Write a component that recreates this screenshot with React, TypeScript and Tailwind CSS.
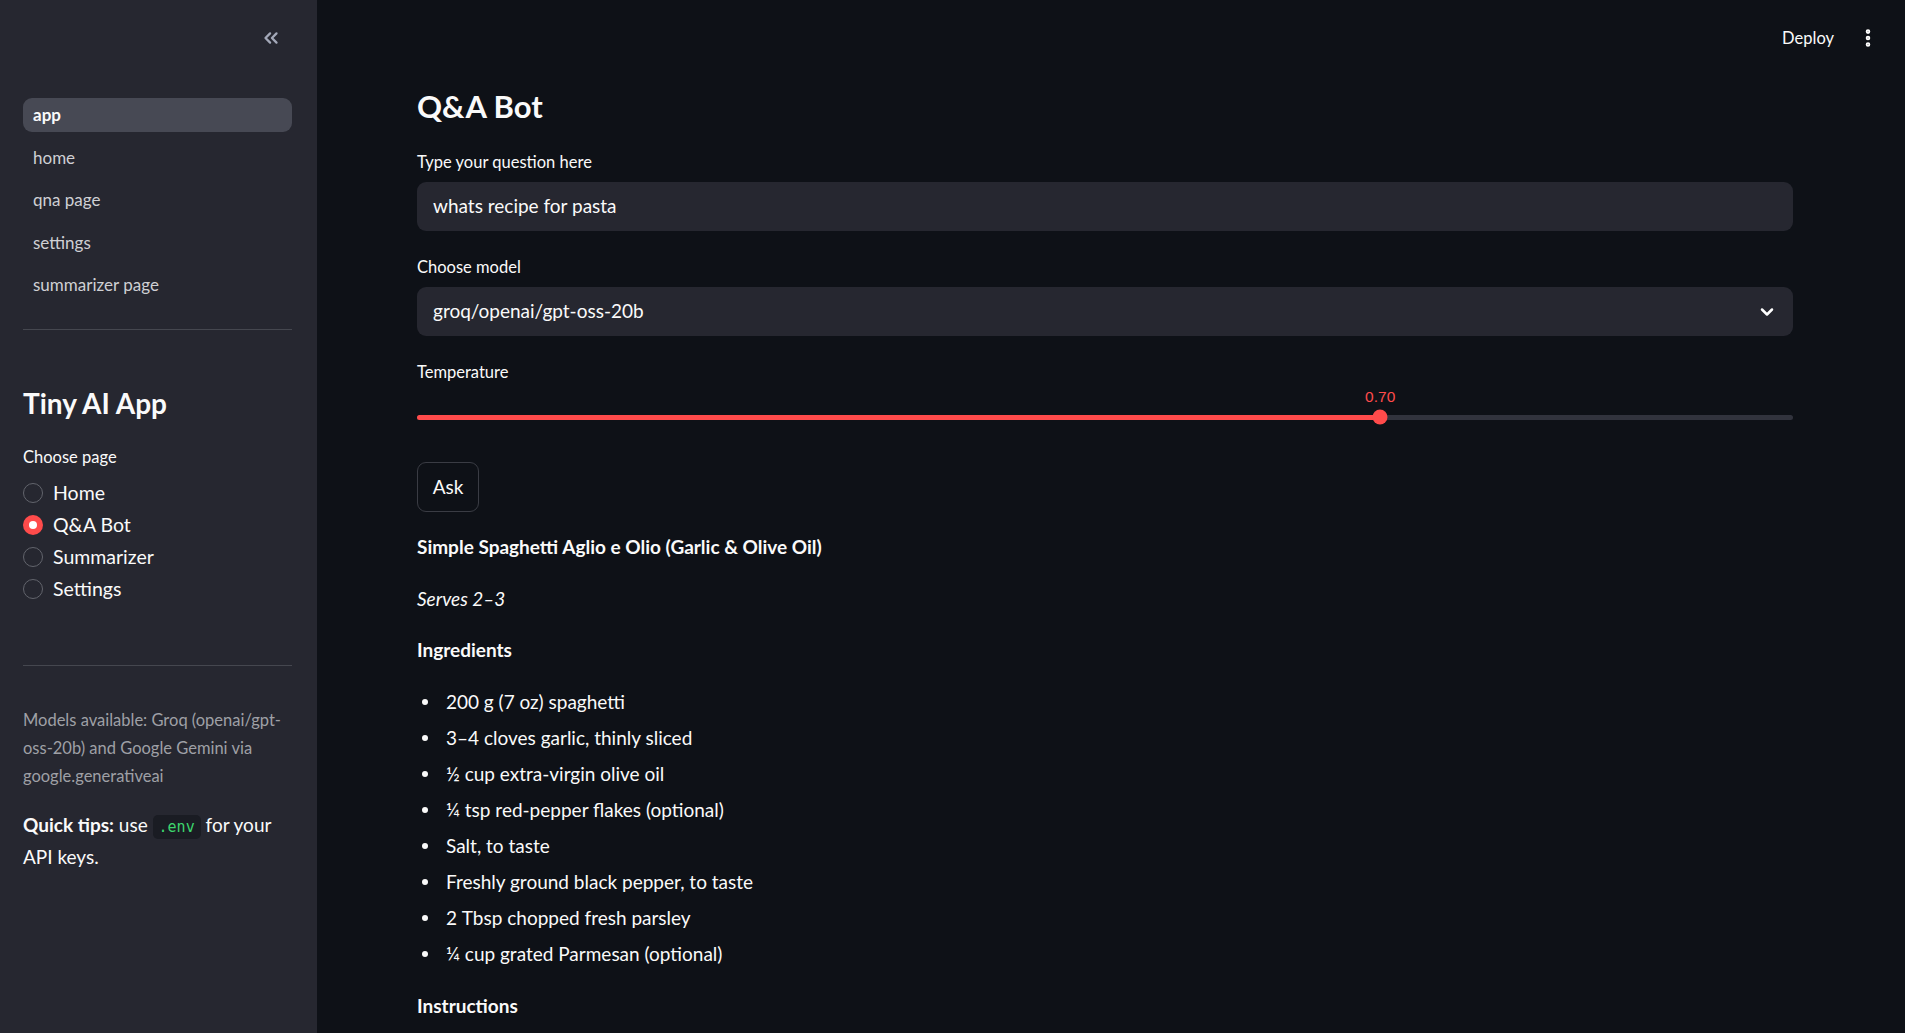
import React from "react";
import { ChevronsLeft, ChevronDown, EllipsisVertical } from "lucide-react";

const FONT = { fontFamily: "Lato, 'Noto Sans', sans-serif" };

const navItems = ["app", "home", "qna page", "settings", "summarizer page"];
const radios = ["Home", "Q&A Bot", "Summarizer", "Settings"];
const ingredients = [
  "200\u202Fg (7\u202Foz) spaghetti",
  "3\u20134 cloves garlic, thinly sliced",
  "\u00BD cup extra-virgin olive oil",
  "\u00BC tsp red-pepper flakes (optional)",
  "Salt, to taste",
  "Freshly ground black pepper, to taste",
  "2\u202FTbsp chopped fresh parsley",
  "\u00BC cup grated Parmesan (optional)",
];

export default function App() {
  const temp = 0.7;
  return (
    <div
      className="flex h-[1033px] w-[1905px] overflow-hidden bg-[#0e1117] text-[#fafafa]"
      style={FONT}
    >
      {/* Sidebar */}
      <aside className="flex w-[317px] shrink-0 flex-col bg-[#262730] pl-[23px] pr-[25px]">
        <div className="flex h-[76px] items-center justify-end pr-[10px]">
          <ChevronsLeft className="h-[22px] w-[22px] text-[#a3a8b8]" strokeWidth={2.5} />
        </div>
        <nav className="mt-[22px] flex flex-col gap-[8.5px]">
          {navItems.map((n, i) => (
            <div
              key={n}
              className={
                i === 0
                  ? "flex h-[34px] items-center rounded-[9px] bg-[#474954] pl-[10px] text-[17px] font-bold text-[#fafafa]"
                  : "flex h-[34px] items-center rounded-[9px] pl-[10px] text-[17px] text-[#cfd0d4]"
              }
            >
              {n}
            </div>
          ))}
        </nav>
        <div className="mt-[27px] h-px bg-[#45474f]" />
        <div className="mt-[51px] flex h-[44px] items-center text-[28px] font-bold leading-none">
          Tiny AI App
        </div>
        <div className="mt-[20px] flex h-[24px] items-center text-[16.5px]">Choose page</div>
        <div className="mt-[8px] flex flex-col">
          {radios.map((r, i) => (
            <div key={r} className="flex h-[32px] items-center gap-[10px]">
              {i === 1 ? (
                <span className="flex h-[20px] w-[20px] items-center justify-center rounded-full bg-[#ff4b4b]">
                  <span className="h-[8px] w-[8px] rounded-full bg-white" />
                </span>
              ) : (
                <span className="h-[20px] w-[20px] rounded-full border-[1.5px] border-[#62646c]" />
              )}
              <span className="text-[19.5px]">{r}</span>
            </div>
          ))}
        </div>
        <div className="mt-[60px] h-px bg-[#45474f]" />
        <div className="mt-[40px] text-[16.5px] leading-[28px] text-[#9fa0a6]">
          Models available: Groq (openai/gpt-
          <br />
          oss-20b) and Google Gemini via
          <br />
          google.generativeai
        </div>
        <div className="mt-[19px] text-[19px] leading-[32px]">
          <span className="font-bold">Quick tips:</span> use{" "}
          <code
            className="rounded-[5px] bg-[#1a1c23] px-[6px] py-[3px] text-[15px] leading-none text-[#3dd56d]"
            style={{ fontFamily: "'DejaVu Sans Mono', monospace" }}
          >
            .env
          </code>{" "}
          for your
          <br />
          API keys.
        </div>
      </aside>

      {/* Main */}
      <main className="flex min-w-0 flex-1 flex-col">
        <header className="flex h-[76px] items-center justify-end gap-[23px] pr-[26px]">
          <span className="text-[16.5px]">Deploy</span>
          <EllipsisVertical className="h-[22px] w-[22px] text-white" strokeWidth={3} />
        </header>

        <div className="flex flex-col pl-[100px] pr-[112px] pt-[6px]">
          <h1 className="flex h-[48px] items-center text-[31px] font-bold leading-none">Q&amp;A Bot</h1>

          <div className="mt-[20px] flex h-[24px] items-center text-[16.5px]">Type your question here</div>
          <div className="mt-[8px] flex h-[49px] items-center rounded-[9px] bg-[#262730] px-[16px] text-[19px]">
            whats recipe for pasta
          </div>

          <div className="mt-[24px] flex h-[24px] items-center text-[16.5px]">Choose model</div>
          <div className="mt-[8px] flex h-[49px] items-center justify-between rounded-[9px] bg-[#262730] pl-[16px] pr-[16px] text-[19px]">
            <span>groq/openai/gpt-oss-20b</span>
            <ChevronDown className="h-[20px] w-[20px] text-white" strokeWidth={3} />
          </div>

          <div className="mt-[24px] flex h-[24px] items-center text-[16.5px]">Temperature</div>
          <div className="relative h-[44px]">
            <div
              className="absolute top-0 flex h-[26px] -translate-x-1/2 items-center text-[15.5px] text-[#ff4b4b]"
              style={{ left: `${temp * 100}%`, fontFamily: "'Liberation Sans', Arial, sans-serif" }}
            >
              0.70
            </div>
            <div className="absolute left-0 right-0 top-[26px] flex h-[14px] items-center">
              <div className="relative h-[5px] w-full rounded-full bg-[#31333d]">
                <div
                  className="absolute left-0 top-0 h-[5px] rounded-full bg-[#ff4b4b]"
                  style={{ width: `${temp * 100}%` }}
                />
                <div
                  className="absolute top-1/2 h-[15px] w-[15px] -translate-x-1/2 -translate-y-1/2 rounded-full bg-[#ff4b4b]"
                  style={{ left: `${temp * 100}%` }}
                />
              </div>
            </div>
          </div>

          <button className="mt-[34px] flex h-[50px] w-[62px] items-center justify-center rounded-[9px] border border-[#3a3c44] bg-[#0e1117] text-[19px] text-[#fafafa]">
            Ask
          </button>

          <div className="mt-[20px] flex h-[30px] items-center text-[19px] font-bold">
            Simple Spaghetti Aglio e Olio (Garlic &amp; Olive Oil)
          </div>
          <div className="mt-[22px] flex h-[30px] items-center text-[19px] italic">Serves 2–3</div>
          <div className="mt-[21px] flex h-[30px] items-center text-[19px] font-bold">Ingredients</div>
          <ul className="mt-[22px] flex flex-col gap-[6px]">
            {ingredients.map((it) => (
              <li key={it} className="flex h-[30px] items-center text-[19px]">
                <span className="ml-[5px] mr-[18px] h-[6px] w-[6px] rounded-full bg-[#fafafa]" />
                <span>{it}</span>
              </li>
            ))}
          </ul>
          <div className="mt-[22px] flex h-[30px] items-center text-[19px] font-bold">Instructions</div>
        </div>
      </main>
    </div>
  );
}
